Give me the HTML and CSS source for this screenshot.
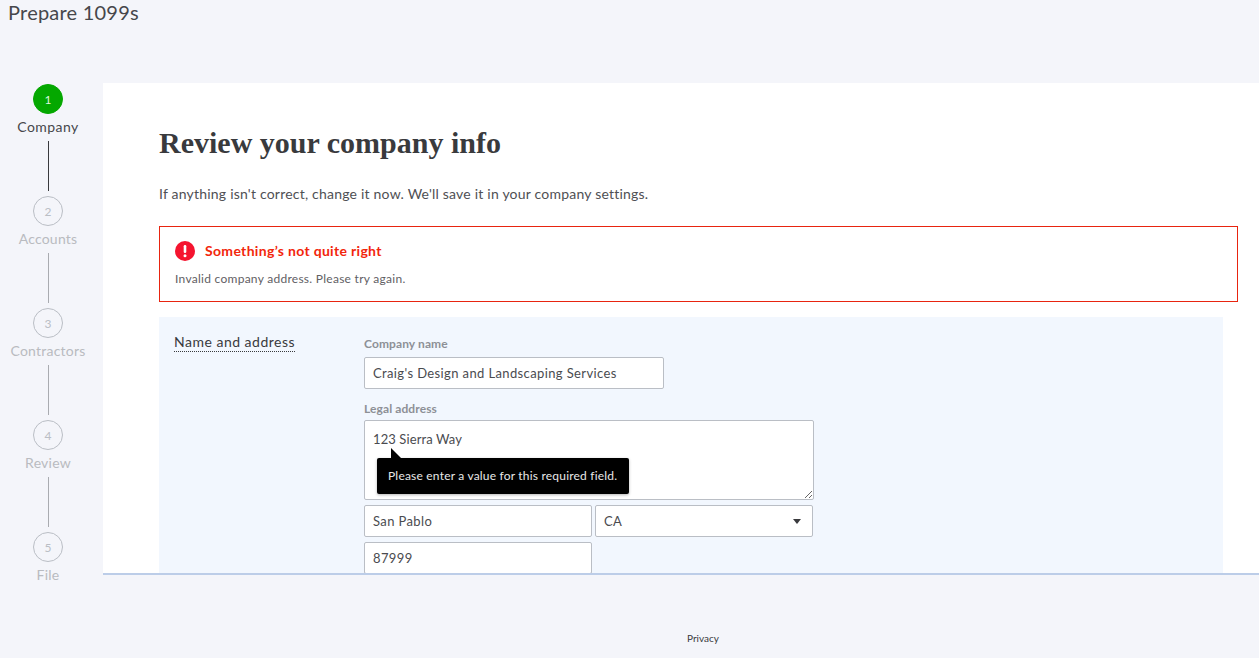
FILE: index.html
```html
<!DOCTYPE html>
<html lang="en">
<head>
<meta charset="utf-8">
<title>Prepare 1099s</title>
<link rel="stylesheet" href="styles.css">
</head>
<body>
<header class="top"><h1 class="page-title">Prepare 1099s</h1></header>
<div class="body-row">
  <nav class="steps">
    <div class="step active"><span class="dot">1</span><span class="step-label">Company</span></div>
    <span class="link dark"></span>
    <div class="step"><span class="dot">2</span><span class="step-label">Accounts</span></div>
    <span class="link"></span>
    <div class="step"><span class="dot">3</span><span class="step-label">Contractors</span></div>
    <span class="link"></span>
    <div class="step"><span class="dot">4</span><span class="step-label">Review</span></div>
    <span class="link"></span>
    <div class="step"><span class="dot">5</span><span class="step-label">File</span></div>
  </nav>
  <main class="panel">
    <h2 class="heading">Review your company info</h2>
    <p class="intro">If anything isn't correct, change it now. We'll save it in your company settings.</p>
    <section class="alert">
      <div class="alert-head">
        <svg class="alert-icon" width="20" height="20" viewBox="0 0 20 20"><circle cx="10" cy="10" r="10" fill="#f5142f"/><rect x="8.7" y="4" width="2.6" height="8" rx="1.2" fill="#fff"/><circle cx="10" cy="14.8" r="1.5" fill="#fff"/></svg>
        <strong class="alert-title">Something’s not quite right</strong>
      </div>
      <p class="alert-text">Invalid company address. Please try again.</p>
    </section>
    <section class="form-band">
      <div class="band-title"><span class="dotted">Name and address</span></div>
      <div class="fields">
        <label class="field-label first">Company name</label>
        <input class="input name" value="Craig's Design and Landscaping Services">
        <label class="field-label">Legal address</label>
        <div class="area-wrap">
          <textarea class="area">123 Sierra Way</textarea>
          <div class="tooltip">Please enter a value for this required field.</div>
        </div>
        <div class="row">
          <input class="input city" value="San Pablo">
          <div class="input state">CA<span class="caret"></span></div>
        </div>
        <input class="input zip" value="87999">
      </div>
    </section>
  </main>
</div>
<footer class="foot">Privacy</footer>
</body>
</html>
```
FILE: styles.css
```css
* { box-sizing: border-box; }
html, body { margin: 0; height: 100%; }
body {
  background: #f4f5fa;
  font-family: "Lato", "Open Sans", sans-serif;
  color: #393a3d;
  overflow: hidden;
  display: flex;
  flex-direction: column;
  height: 658px;
}
.top { height: 83px; padding: 0 0 0 8px; flex: none; }
.page-title { margin: 0; font-size: 20px; line-height: 24px; font-weight: 400; letter-spacing: 0.22px; color: #46474b; }
.body-row { display: flex; height: 492px; flex: none; }
.steps { width: 103px; flex: none; display: flex; flex-direction: column; align-items: center; padding: 1px 7px 0 0; overflow: visible; }
.step { display: flex; flex-direction: column; align-items: center; height: 57px; flex: none; color: #b9bbc0; }
.dot {
  width: 30px; height: 30px; border-radius: 50%; border: 1px solid #babec5;
  display: flex; align-items: center; justify-content: center; font-size: 12px; color: #babec5; flex: none;
}
.step-label { font-size: 14px; line-height: 20px; margin-top: 3px; letter-spacing: 0.22px; white-space: nowrap; }
.step.active { color: #46474b; }
.step.active .step-label { letter-spacing: 0.45px; }
.step.active .dot { background: #04a800; border-color: #04a800; color: #dff5df; }
.link { width: 1px; height: 50px; background: #a9abb0; flex: none; margin-bottom: 5px; margin-left: 1px; }
.link.dark { background: #393a3d; }
.panel {
  flex: 1; background: #fff; border-bottom: 2px solid #bccde8;
  padding: 0 21px 0 56px; overflow: hidden; height: 492px;
}
.heading { margin: 42px 0 0; font-family: "Liberation Serif", serif; font-size: 30px; line-height: 36px; font-weight: 700; color: #393a3d; }
.intro { margin: 23px 0 0; font-size: 14px; line-height: 20px; letter-spacing: 0.21px; color: #4f5054; }
.alert { margin-top: 22px; height: 76px; border: 1px solid #e8240f; padding: 14px 15px 0; }
.alert-head { display: flex; align-items: center; gap: 10px; }
.alert-title { font-size: 14px; line-height: 20px; color: #f2260c; font-weight: 700; letter-spacing: 0.32px; }
.alert-text { margin: 9px 0 0; font-size: 12px; line-height: 18px; color: #5f6064; letter-spacing: 0.27px; }
.form-band { margin: 15px 15px 0 0; background: #f2f7fe; padding: 15px; display: flex; height: 300px; }
.band-title { width: 190px; flex: none; font-size: 14px; line-height: 20px; letter-spacing: 0.5px; }
.dotted { border-bottom: 1px dotted #393a3d; display: inline-block; line-height: 18px; }
.fields { width: 450px; }
.field-label { display: block; font-size: 12px; line-height: 16px; font-weight: 700; color: #8d9096; margin: 12px 0 3px; letter-spacing: 0.1px; }
.field-label.first { margin: 4px 0 5px; }
.input {
  display: block; height: 32px; border: 1px solid #babec5; border-radius: 2px; background: #fff;
  font: 13px "Lato", sans-serif; letter-spacing: 0.38px; color: #4a4b4f; padding: 0 8px; outline: none;
}
.name { width: 300px; }
.area-wrap { position: relative; width: 450px; height: 80px; }
.area {
  display: block; width: 450px; height: 80px; border: 1px solid #babec5; border-radius: 2px; background: #fff;
  font: 13px/18px "Lato", sans-serif; letter-spacing: 0.1px; color: #4a4b4f; padding: 9px 8px; resize: both; outline: none;
}
.tooltip {
  position: absolute; left: 13px; top: 38px; background: #000; color: #e8e8e8; border-radius: 2px;
  font-size: 12px; line-height: 18px; padding: 9px 12px 9px 11px; letter-spacing: 0.2px; white-space: nowrap; height: 36px;
  box-shadow: 0 1px 3px rgba(0,0,0,.3);
}
.tooltip::before {
  content: ""; position: absolute; left: 14px; top: -10px; width: 0; height: 0;
  border-left: 0 solid transparent; border-right: 11px solid transparent; border-bottom: 11px solid #000;
}
.row { display: flex; gap: 3px; margin-top: 5px; }
.city { width: 228px; }
.state { width: 218px; position: relative; line-height: 30px; }
.caret { position: absolute; right: 11px; top: 13px; border-left: 4.5px solid transparent; border-right: 4.5px solid transparent; border-top: 5px solid #393a3d; }
.zip { width: 228px; margin-top: 5px; }
.foot { flex: none; padding: 56px 0 0 147px; text-align: center; font-size: 10px; line-height: 14px; color: #393a3d; letter-spacing: 0; }
```
